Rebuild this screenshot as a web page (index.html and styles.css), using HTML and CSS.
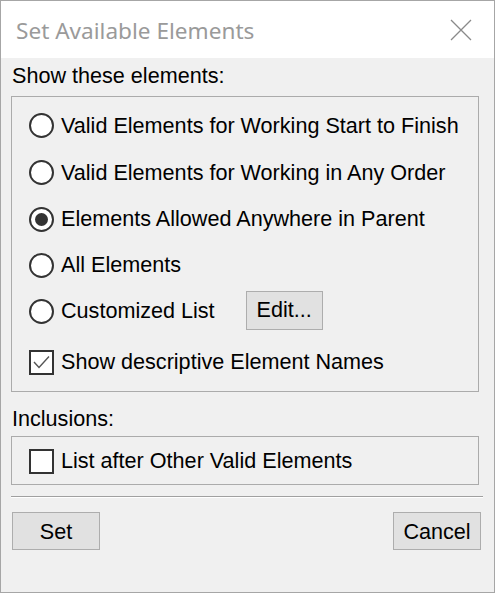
FILE: index.html
```html
<!DOCTYPE html>
<html>
<head>
<meta charset="utf-8">
<link rel="stylesheet" href="styles.css">
</head>
<body>
<div class="window">
  <div class="titlebar">
    <span class="title">Set Available Elements</span>
    <svg class="close" width="22" height="22" viewBox="0 0 22 22"><path d="M1 1 L21 21 M21 1 L1 21" stroke="#8a8a8a" stroke-width="1.3" fill="none"/></svg>
  </div>
  <div class="content">
    <div class="label label-first">Show these elements:</div>
    <div class="group group-main">
      <div class="row r47"><span class="radio"></span><span class="txt">Valid Elements for Working Start to Finish</span></div>
      <div class="row r47"><span class="radio"></span><span class="txt">Valid Elements for Working in Any Order</span></div>
      <div class="row r46"><span class="radio checked"></span><span class="txt">Elements Allowed Anywhere in Parent</span></div>
      <div class="row r46"><span class="radio"></span><span class="txt">All Elements</span></div>
      <div class="row r46"><span class="radio"></span><span class="txt txt-custom">Customized List</span><span class="btn btn-edit">Edit...</span></div>
      <div class="row r46 row-check"><span class="check"><svg width="21" height="21" viewBox="0 0 21 21"><path d="M3 10 L8 15.5 L18 4.5" stroke="#555" stroke-width="1.4" fill="none"/></svg></span><span class="txt">Show descriptive Element Names</span></div>
    </div>
    <div class="label label-second">Inclusions:</div>
    <div class="group group-inc">
      <div class="row r47"><span class="check"></span><span class="txt">List after Other Valid Elements</span></div>
    </div>
    <div class="separator"></div>
    <div class="buttons">
      <span class="btn btn-main">Set</span>
      <span class="btn btn-main">Cancel</span>
    </div>
  </div>
</div>
</body>
</html>
```
FILE: styles.css
```css
html, body {
  margin: 0;
  padding: 0;
  background: #ffffff;
}
.window {
  width: 495px;
  height: 593px;
  box-sizing: border-box;
  border: 1px solid #a6a6a6;
  display: flex;
  flex-direction: column;
  font-family: "Liberation Sans", Arial, sans-serif;
  font-size: 21.6px;
  color: #000;
}
.titlebar {
  height: 57px;
  flex: none;
  background: #ffffff;
  display: flex;
  align-items: center;
  justify-content: space-between;
  padding: 0 22px 0 15px;
}
.title {
  font-family: "Noto Sans", "Open Sans", sans-serif;
  font-size: 22.6px;
  color: #9a9a9a;
  margin-top: 2px;
}
.close {
  margin-top: 1px;
}
.content {
  flex: 1;
  background: #f0f0f0;
  padding: 0 0 0 10px;
  display: flex;
  flex-direction: column;
}
.label {
  height: 24px;
  line-height: 24px;
  padding-left: 1px;
}
.label-first {
  margin-top: 6px;
  margin-bottom: 8px;
}
.label-second {
  margin-top: 15px;
  margin-bottom: 5px;
}
.group {
  width: 468px;
  box-sizing: border-box;
  border: 1px solid #ababab;
  display: flex;
  flex-direction: column;
  padding-left: 17px;
}
.group-main {
  height: 296px;
  padding-top: 5px;
}
.group-inc {
  height: 49px;
  padding-top: 1px;
}
.row {
  display: flex;
  align-items: center;
}
.r47 { height: 47px; }
.r46 { height: 46px; }
.row-check { margin-top: 5px; }
.txt {
  margin-left: 7px;
  white-space: nowrap;
}
.txt-custom {
  margin-right: 31px;
}
.radio {
  width: 25px;
  height: 25px;
  box-sizing: border-box;
  border: 2px solid #333333;
  border-radius: 50%;
  background: #ffffff;
  display: flex;
  align-items: center;
  justify-content: center;
  flex: none;
}
.radio.checked::after {
  content: "";
  width: 13px;
  height: 13px;
  border-radius: 50%;
  background: #333333;
}
.check {
  width: 25px;
  height: 25px;
  box-sizing: border-box;
  border: 2px solid #333333;
  background: #ffffff;
  display: flex;
  align-items: center;
  justify-content: center;
  flex: none;
}
.check svg { display: block; }
.btn {
  box-sizing: border-box;
  background: #e1e1e1;
  border: 1px solid #adadad;
  display: flex;
  align-items: center;
  justify-content: center;
}
.btn-edit {
  width: 77px;
  height: 39px;
  margin-top: -2px;
}
.separator {
  margin-top: 11px;
  width: 472px;
  height: 1px;
  background: #a0a0a0;
  border-bottom: 1px solid #ffffff;
}
.buttons {
  margin-top: 14px;
  width: 470px;
  padding-left: 1px;
  box-sizing: border-box;
  display: flex;
  justify-content: space-between;
}
.btn-main {
  width: 88px;
  height: 38px;
  padding-top: 1px;
}
```
